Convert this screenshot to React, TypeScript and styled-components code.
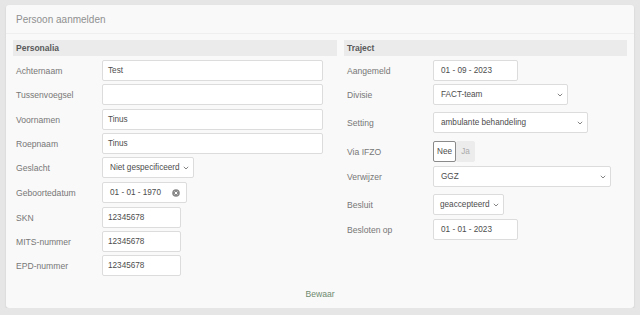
import React from "react";
import styled, { createGlobalStyle } from "styled-components";

const GlobalStyle = createGlobalStyle`
  html, body {
    margin: 0;
    padding: 0;
    background: #e6e6e6;
    font-family: "Liberation Sans", Arial, sans-serif;
    -webkit-font-smoothing: antialiased;
  }
`;

const Card = styled.div`
  margin: 5px 6px 0 6px;
  width: 628px;
  height: 303px;
  background: #f9f9f9;
  border-radius: 3px;
  box-shadow: 0 1px 2px rgba(0, 0, 0, 0.12);
  display: flex;
  flex-direction: column;
  box-sizing: border-box;
`;

const CardHeader = styled.div`
  height: 29px;
  box-sizing: border-box;
  padding-left: 10px;
  display: flex;
  align-items: center;
  font-size: 10px;
  color: #909090;
  border-bottom: 1px solid #efefef;
`;

const Body = styled.div`
  display: grid;
  grid-template-columns: 324px 283px;
  column-gap: 7px;
  padding: 6px 7px 0 7px;
`;

const Column = styled.div`
  display: flex;
  flex-direction: column;
`;

const SectionTitle = styled.div`
  height: 16px;
  background: #ebebeb;
  padding-left: 3px;
  display: flex;
  align-items: center;
  font-size: 8.5px;
  font-weight: bold;
  color: #5a5a5a;
  margin-bottom: 4px;
`;

const Row = styled.div<{ $after?: number }>`
  display: grid;
  grid-template-columns: 89px 1fr;
  align-items: center;
  margin-bottom: ${(p) => p.$after ?? 3}px;
`;

const Label = styled.div`
  padding-left: 3px;
  font-size: 8.6px;
  color: #777;
  white-space: nowrap;
`;

const Field = styled.div<{ $width: number; $pad?: number }>`
  width: ${(p) => p.$width}px;
  height: 21px;
  box-sizing: border-box;
  background: #fff;
  border: 1px solid #dcdcdc;
  border-radius: 2px;
  display: flex;
  align-items: center;
  padding: 0 4px 0 ${(p) => p.$pad ?? 5}px;
  font-size: 8.2px;
  color: #4d4d4d;
  white-space: nowrap;
`;

const Value = styled.span`
  flex: 1;
`;

const Chevron = styled.svg`
  flex: none;
  width: 6px;
  height: 4px;
  margin-left: 2px;
`;

const ClearIcon = styled.svg`
  flex: none;
  width: 8px;
  height: 8px;
  margin-right: 2px;
`;

const Toggle = styled.div`
  display: flex;
  height: 21px;
`;

const ToggleOption = styled.div<{ $active?: boolean }>`
  display: flex;
  align-items: center;
  justify-content: center;
  box-sizing: border-box;
  height: 21px;
  padding: 0 3px;
  font-size: 8.2px;
  color: ${(p) => (p.$active ? "#4d4d4d" : "#aaa")};
  background: ${(p) => (p.$active ? "#fff" : "#ececec")};
  border: 1px solid ${(p) => (p.$active ? "#8a8a8a" : "#ececec")};
  border-radius: 2px;
  min-width: ${(p) => (p.$active ? 23 : 19)}px;
`;

const Footer = styled.div`
  margin-top: auto;
  height: 28px;
  display: flex;
  justify-content: center;
  align-items: center;
  font-size: 8.6px;
  color: #6f8a6f;
`;

const Arrow = () => (
  <Chevron viewBox="0 0 6 4">
    <path d="M0.8 0.8 L3 3 L5.2 0.8" fill="none" stroke="#777" strokeWidth="0.9" />
  </Chevron>
);

const Clear = () => (
  <ClearIcon viewBox="0 0 8 8">
    <circle cx="4" cy="4" r="3.8" fill="#888" />
    <path d="M2.6 2.6 L5.4 5.4 M5.4 2.6 L2.6 5.4" stroke="#fff" strokeWidth="1" />
  </ClearIcon>
);

const App: React.FC = () => {
  return (
    <>
      <GlobalStyle />
      <Card>
        <CardHeader>Persoon aanmelden</CardHeader>
        <Body>
          <Column>
            <SectionTitle>Personalia</SectionTitle>
            <Row>
              <Label>Achternaam</Label>
              <Field $width={221}>Test</Field>
            </Row>
            <Row $after={4}>
              <Label>Tussenvoegsel</Label>
              <Field $width={221} />
            </Row>
            <Row>
              <Label>Voornamen</Label>
              <Field $width={221}>Tinus</Field>
            </Row>
            <Row>
              <Label>Roepnaam</Label>
              <Field $width={221}>Tinus</Field>
            </Row>
            <Row $after={4}>
              <Label>Geslacht</Label>
              <Field $width={92} $pad={7}>
                <Value>Niet gespecificeerd</Value>
                <Arrow />
              </Field>
            </Row>
            <Row $after={4}>
              <Label>Geboortedatum</Label>
              <Field $width={85} $pad={7}>
                <Value>01 - 01 - 1970</Value>
                <Clear />
              </Field>
            </Row>
            <Row>
              <Label>SKN</Label>
              <Field $width={79}>12345678</Field>
            </Row>
            <Row>
              <Label>MITS-nummer</Label>
              <Field $width={79}>12345678</Field>
            </Row>
            <Row>
              <Label>EPD-nummer</Label>
              <Field $width={79}>12345678</Field>
            </Row>
          </Column>
          <Column>
            <SectionTitle>Traject</SectionTitle>
            <Row>
              <Label>Aangemeld</Label>
              <Field $width={85} $pad={7}>01 - 09 - 2023</Field>
            </Row>
            <Row $after={7}>
              <Label>Divisie</Label>
              <Field $width={135} $pad={7}>
                <Value>FACT-team</Value>
                <Arrow />
              </Field>
            </Row>
            <Row $after={8}>
              <Label>Setting</Label>
              <Field $width={155} $pad={7}>
                <Value>ambulante behandeling</Value>
                <Arrow />
              </Field>
            </Row>
            <Row $after={4}>
              <Label>Via IFZO</Label>
              <Toggle>
                <ToggleOption $active>Nee</ToggleOption>
                <ToggleOption>Ja</ToggleOption>
              </Toggle>
            </Row>
            <Row $after={7}>
              <Label>Verwijzer</Label>
              <Field $width={178} $pad={7}>
                <Value>GGZ</Value>
                <Arrow />
              </Field>
            </Row>
            <Row $after={4}>
              <Label>Besluit</Label>
              <Field $width={71} $pad={6}>
                <Value>geaccepteerd</Value>
                <Arrow />
              </Field>
            </Row>
            <Row>
              <Label>Besloten op</Label>
              <Field $width={85} $pad={7}>01 - 01 - 2023</Field>
            </Row>
          </Column>
        </Body>
        <Footer>Bewaar</Footer>
      </Card>
    </>
  );
};

export default App;
